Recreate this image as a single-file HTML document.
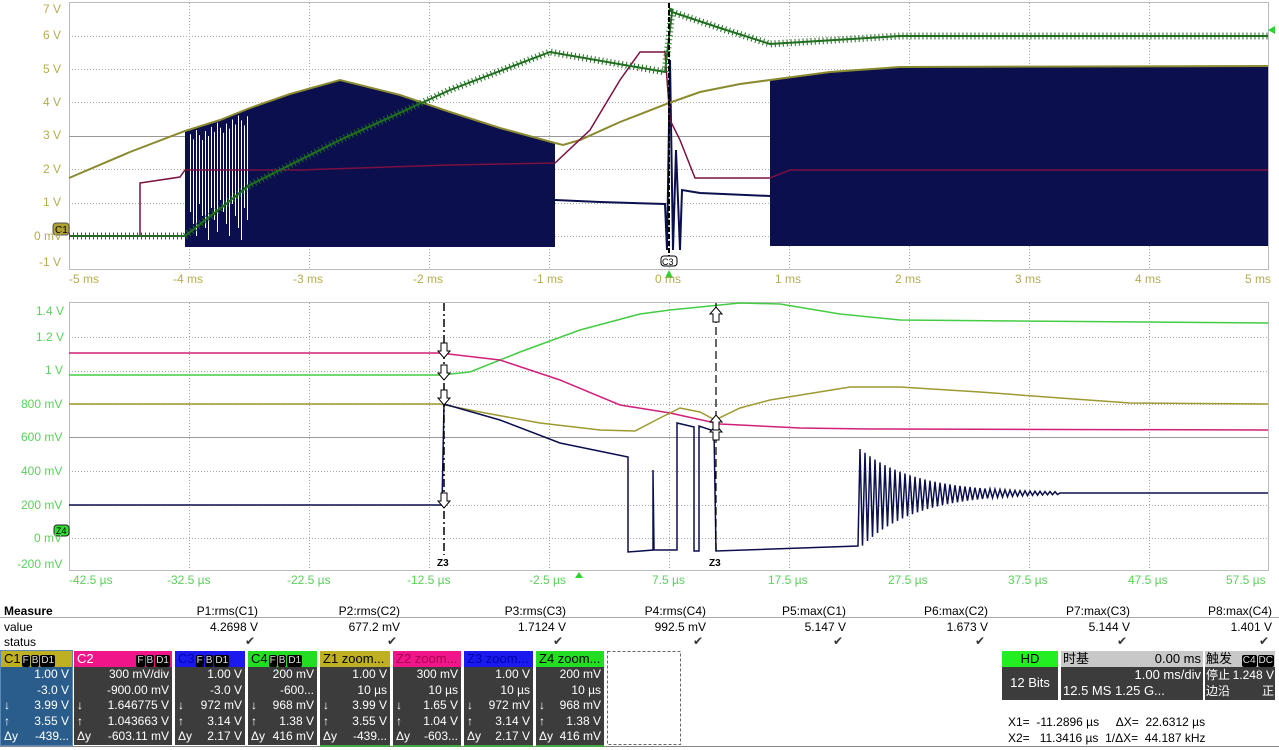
<!DOCTYPE html>
<html><head><meta charset="utf-8"><style>
body{margin:0;width:1279px;height:750px;background:#fff;overflow:hidden;font-family:"Liberation Sans","Noto Sans CJK SC",sans-serif;position:relative}
.a{position:absolute;white-space:nowrap}
.ax{font-size:12px;color:#b4ac50}
.axg{font-size:12px;color:#5cd05c}
.m{font-size:12px;color:#000}
.box{position:absolute;top:651px;height:94px;background:#3c3c3c;color:#fff;font-size:12px}
.box .h{height:16px;line-height:16px;padding-left:3px;font-size:13px}
.box .r{height:15.6px;line-height:15.6px;text-align:right;padding-right:3px;position:relative}
.box .r i{position:absolute;left:3px;font-style:normal}
.t{display:inline-block;background:#000;color:#ddd;font-size:10px;padding:0 1px;margin-left:1px;line-height:12px;border-radius:2px}
</style></head><body>
<svg width="1279" height="750" style="position:absolute;left:0;top:0" id="s">
<g stroke="#bbb" stroke-width="1" fill="none">
<rect x="69.5" y="2.5" width="1199" height="267"/>
<rect x="69.5" y="302.5" width="1199" height="268"/>
</g>
<g stroke="#aaa" stroke-dasharray="1 2" id="grid"></g>
<g stroke="#999"><line x1="69" y1="136.5" x2="1268" y2="136.5"/><line x1="69" y1="437.5" x2="1268" y2="437.5"/></g>
<polygon fill="#0b0f4e" points="185,131 220,120 250,108 290,94 340,80 400,95 450,112 500,128 555,143 555,247 185,247"/>
<g id="gaps" stroke="#fff" stroke-width="1"></g>
<polygon fill="#0b0f4e" points="770,80 830,72 900,67 1268,66 1268,246 770,246"/>
<polyline fill="none" stroke="#0b0f4e" stroke-width="2" points="555,200 600,202 665,204 667,250 670,60 673,250 676,150 680,250 682,190 700,193 770,196"/>
<polyline fill="none" stroke="#8a8a30" stroke-width="2" points="69,178 130,152 185,131 220,120 250,108 290,94 340,80 400,95 450,112 500,128 555,143 563,145 580,140 620,122 669,103 700,92 740,84 770,80 830,72 900,67 1268,66"/>
<polyline fill="none" stroke="#7a1040" stroke-width="1.5" points="69,236 140,236 140,183 180,177 185,170 300,170 450,165 555,163 590,130 620,80 640,52 665,52 670,120 680,140 695,178 770,178 790,170 1268,170"/>
<g fill="none" stroke="#1f6f1f">
<polyline stroke-width="7" stroke-dasharray="1 3" points="69,236 185,236 250,185 340,140 450,90 550,52 665,72 672,12 720,28 770,44 900,36 1268,36"/>
<polyline stroke-width="2" points="69,236 185,236 250,185 340,140 450,90 550,52 665,72 672,12 720,28 770,44 900,36 1268,36"/>
</g>
<line x1="669" y1="3" x2="669" y2="262" stroke="#000" stroke-width="2" stroke-dasharray="5 2"/>
<polygon points="1268,30 1275,26 1275,34" fill="#30d030"/>
<polygon points="669,270 665,278 673,278" fill="#30d030"/>
<rect x="661" y="256" width="16" height="10" rx="3" fill="#fff" stroke="#000"/><text x="662" y="265" font-size="9" font-family="Liberation Sans">C3</text>
<rect x="53" y="223" width="16" height="12" rx="3" fill="#b0a030" stroke="#555"/><text x="55" y="233" font-size="10" font-family="Liberation Sans">C1</text>
<polyline fill="none" stroke="#44cc44" stroke-width="1.5" points="69,375 440,375 470,372 520,352 580,330 640,314 670,310 740,303 780,304 840,314 900,320 1268,323"/>
<polyline fill="none" stroke="#d0207a" stroke-width="1.5" points="69,353 440,353 500,360 560,380 620,405 670,413 720,424 800,428 870,429 1268,430"/>
<polyline fill="none" stroke="#9c9a30" stroke-width="1.5" points="69,404 440,404 480,412 540,423 600,430 635,431 660,418 680,408 700,412 715,420 740,408 770,400 850,387 900,387 980,392 1060,398 1130,403 1268,404"/>
<polyline fill="none" stroke="#0b0f4e" stroke-width="1.5" id="blue" points="69,505 442,505 444,404 500,420 560,443 628,457 628,552 653,550 653,470 654,550 677,550 677,423 694,427 694,551 699,551 699,426 714,431 716,551 858,546"/>
<g stroke="#000" stroke-width="1.5" stroke-dasharray="8 3 2 3"><line x1="444" y1="303" x2="444" y2="555"/></g>
<g stroke="#000" stroke-width="1.2" stroke-dasharray="8 4"><line x1="716" y1="303" x2="716" y2="555"/></g>
<g fill="#fff" stroke="#000" stroke-width="1">
<path d="M441,343h6v8h3l-6,7-6-7h3z"/><path d="M441,365h6v8h3l-6,7-6-7h3z"/><path d="M441,390h6v8h3l-6,7-6-7h3z"/><path d="M441,493h6v8h3l-6,7-6-7h3z"/>
<path d="M713,322h6v-8h3l-6,-7-6,7h3z"/><path d="M713,440h6v-8h3l-6,-7-6,7h3z"/><path d="M713,430h6v-8h3l-6,-7-6,7h3z"/>
</g>
<text x="437" y="566" font-size="10" font-family="Liberation Sans" font-weight="bold">Z3</text>
<text x="709" y="566" font-size="10" font-family="Liberation Sans" font-weight="bold">Z3</text>
<rect x="54" y="525" width="15" height="11" rx="3" fill="#30dd30" stroke="#222"/><text x="56" y="534" font-size="9" font-family="Liberation Sans">Z4</text>
<polygon points="579,572 575,578 583,578" fill="#30d030"/>
<line x1="0" y1="617.5" x2="1279" y2="617.5" stroke="#aaa"/>
<line x1="0" y1="746.5" x2="1279" y2="746.5" stroke="#888"/>
<rect x="607.5" y="651.5" width="73" height="93" fill="none" stroke="#666" stroke-dasharray="3 2"/>
</svg>
<script>
(function(){
var g=document.getElementById('grid'),h='';
for(var i=1;i<10;i++){var x=69+120*i+.5;h+='<line x1="'+x+'" y1="3" x2="'+x+'" y2="269"/><line x1="'+x+'" y1="303" x2="'+x+'" y2="570"/>';}
for(var v=0;v<=6;v++){if(v==3)continue;var y=Math.round(236-33.4*v)+.5;h+='<line x1="69" y1="'+y+'" x2="1268" y2="'+y+'"/>';}
[337,371,404,471,505,538].forEach(function(y){h+='<line x1="69" y1="'+(y+.5)+'" x2="1268" y2="'+(y+.5)+'"/>';});
g.innerHTML=h;
var gp=document.getElementById('gaps'),s='';
for(var x=190;x<250;x+=3){var top=131-(x-185)*0.35+(x%7)*2;s+='<line x1="'+(x+.5)+'" y1="'+(top+3)+'" x2="'+(x+.5)+'" y2="'+(200+(x%11)*4)+'"/>';}
gp.innerHTML=s;
var b=document.getElementById('blue'),p=b.getAttribute('points');
var t=0;for(var x=860;x<1060;x+=2.5){var a=55*Math.exp(-(x-860)/55);p+=' '+x.toFixed(1)+','+(493+(t%2?a:-a*0.8)).toFixed(1);t++;}
p+=' 1060,493 1268,493';b.setAttribute('points',p);
})();
</script>
<div class="a ax" style="left:43px;top:2px">7 V</div>
<div class="a ax" style="left:43px;top:28px">6 V</div>
<div class="a ax" style="left:43px;top:62px">5 V</div>
<div class="a ax" style="left:43px;top:95px">4 V</div>
<div class="a ax" style="left:43px;top:128px">3 V</div>
<div class="a ax" style="left:43px;top:162px">2 V</div>
<div class="a ax" style="left:43px;top:195px">1 V</div>
<div class="a ax" style="left:34px;top:229px">0 mV</div>
<div class="a ax" style="left:39px;top:255px">-1 V</div>
<div class="a ax" style="left:69px;top:272px">-5 ms</div>
<div class="a ax" style="left:173px;top:272px">-4 ms</div>
<div class="a ax" style="left:293px;top:272px">-3 ms</div>
<div class="a ax" style="left:413px;top:272px">-2 ms</div>
<div class="a ax" style="left:533px;top:272px">-1 ms</div>
<div class="a ax" style="left:655px;top:272px">0 ms</div>
<div class="a ax" style="left:775px;top:272px">1 ms</div>
<div class="a ax" style="left:895px;top:272px">2 ms</div>
<div class="a ax" style="left:1015px;top:272px">3 ms</div>
<div class="a ax" style="left:1135px;top:272px">4 ms</div>
<div class="a ax" style="left:1245px;top:272px">5 ms</div>
<div class="a axg" style="left:36px;top:304px">1.4 V</div>
<div class="a axg" style="left:36px;top:330px">1.2 V</div>
<div class="a axg" style="left:45px;top:363px">1 V</div>
<div class="a axg" style="left:21px;top:397px">800 mV</div>
<div class="a axg" style="left:21px;top:430px">600 mV</div>
<div class="a axg" style="left:21px;top:464px">400 mV</div>
<div class="a axg" style="left:21px;top:498px">200 mV</div>
<div class="a axg" style="left:34px;top:531px">0 mV</div>
<div class="a axg" style="left:17px;top:557px">-200 mV</div>
<div class="a axg" style="left:69px;top:573px">-42.5 µs</div>
<div class="a axg" style="left:167px;top:573px">-32.5 µs</div>
<div class="a axg" style="left:287px;top:573px">-22.5 µs</div>
<div class="a axg" style="left:407px;top:573px">-12.5 µs</div>
<div class="a axg" style="left:529px;top:573px">-2.5 µs</div>
<div class="a axg" style="left:652px;top:573px">7.5 µs</div>
<div class="a axg" style="left:768px;top:573px">17.5 µs</div>
<div class="a axg" style="left:888px;top:573px">27.5 µs</div>
<div class="a axg" style="left:1008px;top:573px">37.5 µs</div>
<div class="a axg" style="left:1128px;top:573px">47.5 µs</div>
<div class="a axg" style="left:1226px;top:573px">57.5 µs</div>
<div class="a m" style="left:4px;top:604px;font-weight:bold">Measure</div>
<div class="a m" style="left:4px;top:620px">value</div>
<div class="a m" style="left:4px;top:635px">status</div>
<div id="meas"></div>
<script>
(function(){
var n=['P1:rms(C1)','P2:rms(C2)','P3:rms(C3)','P4:rms(C4)','P5:max(C1)','P6:max(C2)','P7:max(C3)','P8:max(C4)'];
var v=['4.2698 V','677.2 mV','1.7124 V','992.5 mV','5.147 V','1.673 V','5.144 V','1.401 V'];
var r=[258,400,566,706,846,988,1130,1272],h='';
for(var i=0;i<8;i++){h+='<div class="a m" style="right:'+(1279-r[i])+'px;top:604px">'+n[i]+'</div><div class="a m" style="right:'+(1279-r[i])+'px;top:620px">'+v[i]+'</div><div class="a m" style="right:'+(1279-r[i]+3)+'px;top:634px;color:#333">&#10004;</div>';}
document.getElementById('meas').innerHTML=h;
})();
</script>
<div class="box" style="left:1px;width:71px;background:#2b5d8c;outline:1px solid #5a8ab8"><div class="h" style="background:#beb022;color:#000">C1<span class="t">F</span><span class="t">B</span><span class="t">D1</span></div>
<div class="r">1.00 V</div><div class="r">-3.0 V</div><div class="r"><i>↓</i>3.99 V</div><div class="r"><i>↑</i>3.55 V</div><div class="r"><i>Δy</i>-439...</div></div>
<div class="box" style="left:74px;width:98px"><div class="h" style="background:#f0168a;color:#fff">C2<span style="float:right;margin-right:2px"><span class="t">F</span><span class="t">B</span><span class="t">D1</span></span></div>
<div class="r">300 mV/div</div><div class="r">-900.00 mV</div><div class="r"><i>↓</i>1.646775 V</div><div class="r"><i>↑</i>1.043663 V</div><div class="r"><i>Δy</i>-603.11 mV</div></div>
<div class="box" style="left:175px;width:70px"><div class="h" style="background:#1a1aee;color:#0000aa">C3<span class="t">F</span><span class="t">B</span><span class="t">D1</span></div>
<div class="r">1.00 V</div><div class="r">-3.0 V</div><div class="r"><i>↓</i>972 mV</div><div class="r"><i>↑</i>3.14 V</div><div class="r"><i>Δy</i>2.17 V</div></div>
<div class="box" style="left:248px;width:69px"><div class="h" style="background:#22dd22;color:#000">C4<span class="t">F</span><span class="t">B</span><span class="t">D1</span></div>
<div class="r">200 mV</div><div class="r">-600...</div><div class="r"><i>↓</i>968 mV</div><div class="r"><i>↑</i>1.38 V</div><div class="r"><i>Δy</i>416 mV</div></div>
<div class="box" style="left:320px;width:70px;border-bottom:2px solid #4a4"><div class="h" style="background:#beb022;color:#000">Z1 zoom...</div>
<div class="r">1.00 V</div><div class="r">10 µs</div><div class="r"><i>↓</i>3.99 V</div><div class="r"><i>↑</i>3.55 V</div><div class="r"><i>Δy</i>-439...</div></div>
<div class="box" style="left:393px;width:68px;border-bottom:2px solid #4a4"><div class="h" style="background:#f0168a;color:#aa0050">Z2 zoom...</div>
<div class="r">300 mV</div><div class="r">10 µs</div><div class="r"><i>↓</i>1.65 V</div><div class="r"><i>↑</i>1.04 V</div><div class="r"><i>Δy</i>-603...</div></div>
<div class="box" style="left:464px;width:69px;border-bottom:2px solid #4a4"><div class="h" style="background:#1a1aee;color:#0000aa">Z3 zoom...</div>
<div class="r">1.00 V</div><div class="r">10 µs</div><div class="r"><i>↓</i>972 mV</div><div class="r"><i>↑</i>3.14 V</div><div class="r"><i>Δy</i>2.17 V</div></div>
<div class="box" style="left:536px;width:68px;border-bottom:2px solid #4a4"><div class="h" style="background:#22dd22;color:#000">Z4 zoom...</div>
<div class="r">200 mV</div><div class="r">10 µs</div><div class="r"><i>↓</i>968 mV</div><div class="r"><i>↑</i>1.38 V</div><div class="r"><i>Δy</i>416 mV</div></div>
<div class="a" style="left:1002px;top:651px;width:56px;height:49px;background:#3c3c3c;color:#fff;font-size:13px;text-align:center">
<div style="background:#22ee22;color:#000;height:16px;line-height:16px">HD</div><div style="line-height:32px">12 Bits</div></div>
<div class="a" style="left:1061px;top:651px;width:142px;height:49px;background:#3c3c3c;color:#fff;font-size:13px">
<div style="background:#c8c8c8;color:#000;height:16px;line-height:16px;padding:0 2px">时基<span style="float:right">0.00 ms</span></div>
<div style="text-align:right;padding-right:2px;line-height:16px">1.00 ms/div</div><div style="padding-left:2px;line-height:16px">12.5 MS 1.25 G...</div></div>
<div class="a" style="left:1205px;top:651px;width:70px;height:49px;background:#3c3c3c;color:#fff;font-size:12px;overflow:hidden">
<div style="background:#c8c8c8;color:#000;height:16px;line-height:16px;padding:0 1px;font-size:13px">触发<span style="float:right"><span class="t">C4</span><span class="t">DC</span></span></div>
<div style="line-height:16px;padding:0 1px;display:flex;justify-content:space-between"><span>停止</span><span>1.248 V</span></div><div style="line-height:16px;padding:0 1px;display:flex;justify-content:space-between"><span>边沿</span><span>正</span></div></div>
<div class="a m" style="left:1008px;top:715px">X1=&nbsp; -11.2896 µs&nbsp;&nbsp;&nbsp;&nbsp; ΔX=&nbsp; 22.6312 µs</div>
<div class="a m" style="left:1008px;top:731px">X2=&nbsp;&nbsp; 11.3416 µs&nbsp; 1/ΔX=&nbsp; 44.187 kHz</div>
</body></html>
